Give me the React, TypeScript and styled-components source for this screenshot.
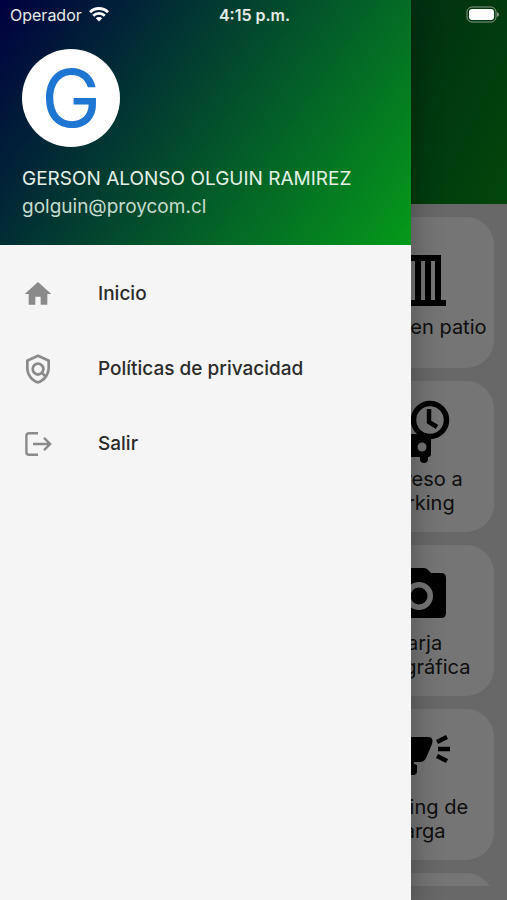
import React from "react";
import styled, { createGlobalStyle } from "styled-components";
import { MdHome, MdOutlinePolicy } from "react-icons/md";

const GlobalStyle = createGlobalStyle`
  *, *::before, *::after { box-sizing: border-box; }
  html, body, #root { height: 100%; }
  body { margin: 0; background: #e2e2e2; font-family: Inter, "Liberation Sans", sans-serif; }
`;

const Screen = styled.div`
  position: relative;
  height: 100%;
  overflow: hidden;
  background: #e2e2e2;
`;

const StatusBar = styled.div`
  position: absolute;
  z-index: 3;
  top: 0;
  left: 0;
  right: 0;
  display: grid;
  grid-template-columns: 1fr auto 1fr;
  align-items: center;
  height: 29px;
  padding: 0 8px 0 10px;
  color: #e4ece8;
  font-size: 16px;
`;

const Carrier = styled.span`
  display: flex;
  align-items: center;
  gap: 7px;
`;

const Clock = styled.span`
  font-weight: 600;
`;

const Battery = styled.svg`
  justify-self: end;
`;

const Home = styled.main`
  display: flex;
  flex-direction: column;
  height: 100%;
  padding-bottom: 14px;
`;

const HomeHeader = styled.header`
  flex: none;
  height: 204px;
  background: linear-gradient(116deg, #000040 0%, #059a19 100%);
`;

const CardGrid = styled.div`
  flex: 1;
  min-height: 0;
  overflow: hidden;
  display: grid;
  grid-template-columns: repeat(3, 1fr);
  grid-auto-rows: 151px;
  gap: 13px 15px;
  padding: 13px;
`;

const Card = styled.button`
  grid-column: 3;
  display: flex;
  flex-direction: column;
  align-items: center;
  justify-content: center;
  padding: 0;
  border: 0;
  border-radius: 28px;
  background: #ffffff;
  color: #222222;
  font-family: inherit;
  font-size: 20px;
  line-height: 24px;
`;

const CardIcon = styled.svg`
  flex: none;
  width: 68px;
  height: 68px;
  color: #000000;
`;

const CardLine = styled.span`
  white-space: nowrap;
`;

const Scrim = styled.div`
  position: absolute;
  z-index: 1;
  inset: 0;
  background: rgba(0, 0, 0, 0.54);
`;

const Drawer = styled.aside`
  position: absolute;
  z-index: 2;
  top: 0;
  bottom: 0;
  left: 0;
  width: 81%;
  background: #f5f5f5;
  box-shadow: 0 10px 28px 2px rgba(0, 0, 0, 0.3);
`;

const Profile = styled.header`
  display: flex;
  flex-direction: column;
  height: 245px;
  padding: 49px 22px 0;
  background: linear-gradient(125deg, #000040 0%, #059a19 100%);
  color: #e3f1e8;
  font-size: 19px;
  line-height: 28px;
`;

const Avatar = styled.div`
  display: flex;
  align-items: center;
  justify-content: center;
  width: 98px;
  height: 98px;
  margin-bottom: 18px;
  border-radius: 50%;
  background: #ffffff;
  color: #1f75d2;
  font-size: 80px;
  font-weight: 400;
`;

const ProfileName = styled.span`
  white-space: nowrap;
`;

const ProfileMail = styled.span`
  color: #c5dccf;
`;

const Menu = styled.nav`
  display: flex;
  flex-direction: column;
  padding-top: 11px;
`;

const MenuItem = styled.a`
  display: flex;
  align-items: center;
  gap: 44px;
  height: 75px;
  padding: 0 22px;
  color: #2b2b2b;
  font-size: 19px;
  font-weight: 500;
  text-decoration: none;

  svg {
    flex: none;
    width: 32px;
    height: 32px;
    color: #8a8a8a;
  }
`;

const WifiIcon = () => (
  <svg width="20" height="15" viewBox="0 0 20 15" aria-hidden="true" fill="none" stroke="#fff" strokeWidth="2.8">
    <path d="M1 5.2a12.8 12.8 0 0 1 18 0" />
    <path d="M4.2 8.7a8.2 8.2 0 0 1 11.6 0" />
    <path d="M10 14.6 6.8 11.3a4.5 4.5 0 0 1 6.4 0Z" fill="#fff" stroke="none" />
  </svg>
);

const LogoutIcon = () => (
  <svg viewBox="0 0 32 32" fill="none" stroke="currentColor" strokeWidth="2.4" aria-hidden="true">
    <path d="M16 5.2H7a2.6 2.6 0 0 0-2.6 2.6v16.4A2.6 2.6 0 0 0 7 26.8h9" />
    <path d="M11 16h17M22 9.8l6.2 6.2-6.2 6.2" />
  </svg>
);

const ContainerIcon = () => (
  <CardIcon viewBox="0 0 68 68" aria-hidden="true">
    <path
      fill="currentColor"
      fillRule="evenodd"
      d="M12 8h44v45h5v6H7v-6h5ZM16 14v39h4V14ZM26 14v39h4V14ZM36 14v39h4V14ZM46 14v39h4V14Z"
    />
  </CardIcon>
);

const ParkingIcon = () => (
  <CardIcon viewBox="0 0 68 68" aria-hidden="true">
    <circle cx="45" cy="21" r="16.500" fill="none" stroke="currentColor" strokeWidth="5.500" />
    <path d="M44 10v13l8 5" fill="none" stroke="currentColor" strokeWidth="4.500" />
    <path
      fill="currentColor"
      fillRule="evenodd"
      d="M6 35h26l14 4v16q0 3-3 3v2q0 4-4 4t-4-4v-2H16v2q0 4-4 4t-4-4v-2l-3-3V39ZM41.500 48a4.500 4.500 0 1 0-9 0 4.500 4.500 0 0 0 9 0Z"
    />
  </CardIcon>
);

const CameraIcon = () => (
  <CardIcon viewBox="0 0 68 68" aria-hidden="true">
    <path
      fill="currentColor"
      fillRule="evenodd"
      d="M26 5h12q3 0 4 1l4 4h10q5 0 5 5v35q0 5-5 5H12q-5 0-5-5V15q0-5 5-5h6l4-4q1-1 4-1ZM48 33a14 14 0 1 0-28 0 14 14 0 0 0 28 0Z"
    />
    <circle cx="34" cy="33" r="8.500" fill="currentColor" />
  </CardIcon>
);

const ScannerIcon = () => (
  <CardIcon viewBox="0 0 68 68" aria-hidden="true">
    <path
      fill="currentColor"
      d="M8 10h35q6 0 4 7l-6 14q-2 4-6 4h-6v2l3 1v6q0 4-4 4H14V34H8Z"
    />
    <path d="m52 15 10-5M53 22h12M52 29l10 5" fill="none" stroke="currentColor" strokeWidth="4.500" />
  </CardIcon>
);

const cards = [
  { icon: <ContainerIcon />, lines: ["Stock en patio"] },
  { icon: <ParkingIcon />, lines: ["Ingreso a", "Parking"] },
  { icon: <CameraIcon />, lines: ["Tarja", "fotográfica"] },
  { icon: <ScannerIcon />, lines: ["Picking de", "carga"] },
  { icon: null, lines: [] },
];

const menu = [
  { icon: <MdHome />, label: "Inicio" },
  { icon: <MdOutlinePolicy />, label: "Políticas de privacidad" },
  { icon: <LogoutIcon />, label: "Salir" },
];

export default function App() {
  return (
    <Screen>
      <GlobalStyle />
      <StatusBar>
        <Carrier>
          Operador
          <WifiIcon />
        </Carrier>
        <Clock>4:15 p.m.</Clock>
        <Battery width="33" height="17" viewBox="0 0 33 17" aria-label="Batería">
          <rect x="1" y="1" width="29" height="15" rx="5" fill="none" stroke="#8a9a8a" />
          <rect x="3" y="3" width="25" height="11" rx="3" fill="#fff" />
          <path d="M31 6q2 1 2 2.500t-2 2.500Z" fill="#8a9a8a" />
        </Battery>
      </StatusBar>
      <Home>
        <HomeHeader />
        <CardGrid>
          {cards.map((card, i) => (
            <Card key={i} type="button">
              {card.icon}
              {card.lines.map((line) => (
                <CardLine key={line}>{line}</CardLine>
              ))}
            </Card>
          ))}
        </CardGrid>
      </Home>
      <Scrim />
      <Drawer>
        <Profile>
          <Avatar>G</Avatar>
          <ProfileName>GERSON ALONSO OLGUIN RAMIREZ</ProfileName>
          <ProfileMail>golguin@proycom.cl</ProfileMail>
        </Profile>
        <Menu>
          {menu.map((item) => (
            <MenuItem key={item.label} href="#">
              {item.icon}
              {item.label}
            </MenuItem>
          ))}
        </Menu>
      </Drawer>
    </Screen>
  );
}
